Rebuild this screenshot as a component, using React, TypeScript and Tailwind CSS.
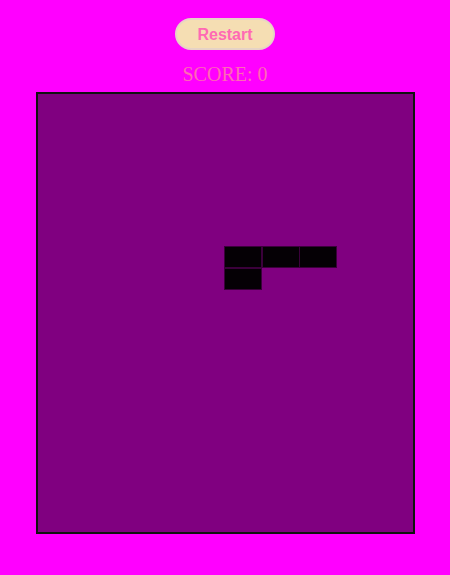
import React from "react";

const cells = [
  { x: 224, y: 246 },
  { x: 262, y: 246 },
  { x: 299, y: 246 },
  { x: 224, y: 268 },
];

export default function App() {
  return (
    <div className="w-[450px] h-[575px] bg-[#ff00ff] flex flex-col items-center">
      <button className="mt-[18px] w-[100px] h-[32px] pt-[2px] rounded-full bg-[#f5deb3] border-2 border-[#e6d3c6] text-[#ff69b4] font-bold text-[16px] leading-none font-['Liberation_Sans',Arial,sans-serif]">
        Restart
      </button>
      <div className="mt-[13px] h-[23px] leading-[23px] text-[20px] text-[#ff69b4] font-['Liberation_Serif','Times_New_Roman',serif]">
        SCORE: 0
      </div>
      <div className="mt-[6px] ml-[1px] relative w-[379px] h-[442px] border-2 border-[#111] bg-[#800080]">
        {cells.map((c, i) => (
          <div
            key={i}
            className="absolute w-[38px] h-[22px] bg-[#050005] border border-[#3b003b]"
            style={{ left: c.x - 38, top: c.y - 94 }}
          />
        ))}
      </div>
    </div>
  );
}
